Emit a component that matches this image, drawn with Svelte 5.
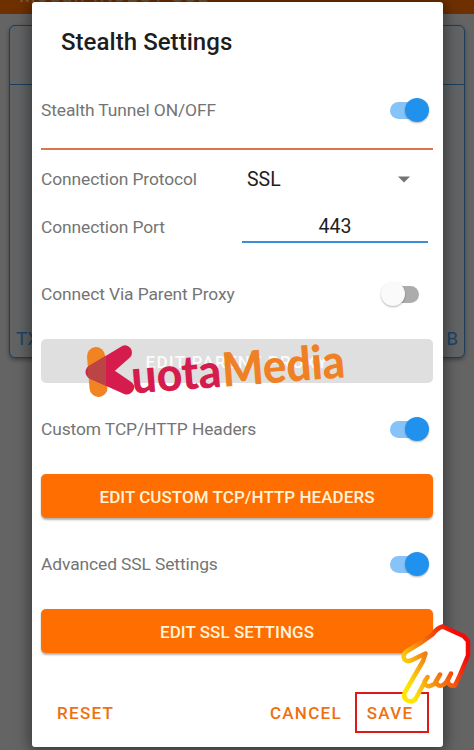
<script lang="ts">
  let stealth = $state(true);
  let parentProxy = $state(false);
  let customHeaders = $state(true);
  let advancedSsl = $state(true);
  let port = $state("443");
</script>

{#snippet toggle(on: boolean, flip: () => void, label: string)}
  <button class="switch" class:on role="switch" aria-checked={on} aria-label={label} onclick={flip}>
    <span class="thumb"></span>
  </button>
{/snippet}

<div class="screen">
  <div class="page">
    <header><span>Modul: INJECT SSL</span></header>
    <div class="card">
      <div class="card-top"></div>
      <div class="card-foot"><span>TX</span><span>B</span></div>
    </div>
  </div>

  <div class="dialog" role="dialog" aria-label="Stealth Settings">
    <h1>Stealth Settings</h1>

    <div class="row first">
      <span class="label">Stealth Tunnel ON/OFF</span>
      {@render toggle(stealth, () => (stealth = !stealth), "Stealth Tunnel")}
    </div>

    <div class="row protocol">
      <span class="label">Connection Protocol</span>
      <div class="select">
        <span>SSL</span>
        <svg width="12" height="7" viewBox="0 0 12 7"><path d="M0 0.5h12L6 6.5z" fill="#737373" /></svg>
      </div>
    </div>

    <div class="row port">
      <span class="label">Connection Port</span>
      <input bind:value={port} aria-label="Connection Port" />
    </div>

    <div class="row proxy">
      <span class="label">Connect Via Parent Proxy</span>
      {@render toggle(parentProxy, () => (parentProxy = !parentProxy), "Parent Proxy")}
    </div>
    <button class="wide" disabled={!parentProxy}>EDIT PARENT PROXY</button>

    <div class="row">
      <span class="label">Custom TCP/HTTP Headers</span>
      {@render toggle(customHeaders, () => (customHeaders = !customHeaders), "Custom Headers")}
    </div>
    <button class="wide" disabled={!customHeaders}>EDIT CUSTOM TCP/HTTP HEADERS</button>

    <div class="row">
      <span class="label">Advanced SSL Settings</span>
      {@render toggle(advancedSsl, () => (advancedSsl = !advancedSsl), "Advanced SSL")}
    </div>
    <button class="wide" disabled={!advancedSsl}>EDIT SSL SETTINGS</button>

    <footer>
      <button class="text-btn reset">RESET</button>
      <button class="text-btn">CANCEL</button>
      <button class="text-btn save">SAVE</button>
    </footer>
  </div>

  <!-- watermark -->
  <svg class="brand" width="270" height="60" viewBox="80 340 270 60">
    <defs>
      <clipPath id="bar"><path d="M87 340h19v60H88z" /></clipPath>
    </defs>
    <path d="M96 356L98.5 388" stroke="#f28322" stroke-width="18" stroke-linecap="round" />
    <path class="k" d="M125 352.500L92.500 372L127 387.500L103.500 371.500Z" fill="#d51c4d" stroke="#d51c4d" />
    <g clip-path="url(#bar)">
      <path class="k" d="M125 352.500L92.500 372L127 387.500L103.500 371.500Z" fill="#ba4545" stroke="#ba4545" />
    </g>
    <g transform="rotate(-4.4 134 393)">
      <text x="132.500" y="393.500" textLength="90" lengthAdjust="spacingAndGlyphs" fill="#d51c4d">uota</text>
      <text x="223.500" y="393.500" textLength="123" lengthAdjust="spacingAndGlyphs" fill="#ef8124">Media</text>
    </g>
  </svg>

  <!-- pointing hand -->
  <svg class="hand" width="74" height="84" viewBox="400 622 74 84">
    <defs>
      <linearGradient id="heat" gradientUnits="userSpaceOnUse" x1="404" y1="680" x2="464" y2="650">
        <stop offset="0" stop-color="#ffe600" />
        <stop offset="0.15" stop-color="#f9c810" />
        <stop offset="0.4" stop-color="#f48a12" />
        <stop offset="0.75" stop-color="#f33c0c" />
        <stop offset="1" stop-color="#f40808" />
      </linearGradient>
    </defs>
    <path
      d="M442.5 626.5Q437 628 432.5 634.5L422 642L406.5 651.5Q402 655 404.5 659.5Q407.5 662.5 412 660L425.5 653.5L423 661L405 692Q402.5 698 407.5 700.5Q413 703 416 698L427.5 677L424.5 681.5Q425 687 430 686L434.5 684L440 674.5L436 681Q437 687.5 443 685L446 682.5L451 673.5L447.5 681Q449 687 455 685.5L459 677L468 655.5V641L463.5 636Z"
      fill="#fff"
      stroke="url(#heat)"
      stroke-width="4.5"
      stroke-linejoin="round"
      stroke-linecap="round"
    />
  </svg>
</div>

<style>
  :global(body) {
    margin: 0;
    background: #636363;
  }

  .screen {
    position: relative;
    width: 474px;
    height: 750px;
    overflow: hidden;
    font-family: Roboto, "Liberation Sans", sans-serif;
    background: #646464;
  }

  .page {
    position: absolute;
    inset: 0;
    display: flex;
    flex-direction: column;
  }

  header {
    height: 14px;
    background: #6f3000;
    overflow: hidden;
    padding-left: 19px;
    color: #74583f;
    font-size: 19px;
    font-weight: 500;
    letter-spacing: 1.5px;
  }

  header span {
    display: block;
    margin-top: -14px;
    line-height: 20px;
  }

  .card {
    box-sizing: border-box;
    display: flex;
    flex-direction: column;
    justify-content: space-between;
    height: 333px;
    margin: 11px 9px 0;
    border: 1.5px solid #1d3f5b;
    border-radius: 6px;
    background: #616364;
    box-shadow: 0 2px 4px rgba(0, 0, 0, 0.35);
  }

  .card-top {
    height: 58px;
    border-bottom: 1px solid #1d3f5b;
  }

  .card-foot {
    display: flex;
    justify-content: space-between;
    padding: 0 6px 6px;
    font-size: 19px;
    line-height: 24px;
    color: #1c4467;
  }

  .dialog {
    position: absolute;
    top: 2px;
    left: 32px;
    box-sizing: border-box;
    display: flex;
    flex-direction: column;
    width: 411px;
    height: 744.5px;
    padding: 0 10px 0 9px;
    border-radius: 3px;
    background: #fff;
    box-shadow: 0 2px 14px 3px rgba(0, 0, 0, 0.4);
  }

  h1 {
    margin: 20px 0 0 20px;
    font-size: 24px;
    line-height: 40px;
    font-weight: 500;
    letter-spacing: 0.05px;
    color: #1d1d1d;
  }

  .row {
    display: flex;
    align-items: center;
    justify-content: space-between;
    height: 91px;
    flex: none;
  }

  .row.first {
    height: 76px;
    margin-top: 10px;
    border-bottom: 2px solid #d9764b;
  }

  .row.protocol {
    height: 58px;
  }

  .row.port {
    height: 38px;
  }

  .row.proxy {
    height: 90px;
    margin-top: 3px;
  }

  .label {
    font-size: 17.4px;
    letter-spacing: -0.1px;
    color: #747474;
    white-space: nowrap;
  }

  .select {
    display: flex;
    align-items: center;
    justify-content: space-between;
    width: 163px;
    padding-right: 23px;
    font-size: 19.5px;
    color: #1f1f1f;
  }

  input {
    box-sizing: border-box;
    width: 186px;
    height: 34px;
    margin: -3px 5px 0 0;
    padding: 3px 0 0;
    border: 0;
    border-bottom: 2px solid #3b8fd9;
    outline: none;
    background: none;
    font: 19.5px Roboto, sans-serif;
    text-align: center;
    color: #1f1f1f;
  }

  .switch {
    position: relative;
    width: 38px;
    height: 17px;
    margin: 1px 5px 0 0;
    padding: 0;
    border: 0;
    border-radius: 9px;
    background: #86c3f8;
  }

  .first .switch {
    margin-top: 0;
  }

  .switch:not(.on) {
    width: 36px;
    margin: 0 14px 0 0;
    background: #acacac;
  }

  .thumb {
    position: absolute;
    top: -4px;
    right: -0.5px;
    width: 24px;
    height: 24px;
    border-radius: 50%;
    background: #2191ee;
    box-shadow: 0 1px 2px rgba(0, 0, 0, 0.3);
  }

  .switch:not(.on) .thumb {
    right: auto;
    left: -2px;
    background: #fafafa;
  }

  .wide {
    flex: none;
    height: 44px;
    padding: 1px 0 0;
    border: 0;
    border-radius: 5px;
    background: #ff6e00;
    box-shadow: 0 1.5px 2px rgba(0, 0, 0, 0.3);
    color: #fff3d9;
    font: 500 17px Roboto, sans-serif;
    letter-spacing: 0.05px;
  }

  .wide:disabled {
    background: #dfdfdf;
    box-shadow: none;
    color: #fcfcfc;
    letter-spacing: 1.3px;
  }

  footer {
    display: flex;
    align-items: center;
    margin-top: 39px;
    height: 41px;
  }

  .text-btn {
    box-sizing: border-box;
    height: 41px;
    padding: 1px 0 0;
    border: 0;
    background: none;
    color: #ee7011;
    font: 500 17px Roboto, sans-serif;
    letter-spacing: 1.3px;
  }

  .reset {
    margin: 0 auto 0 16px;
  }

  .save {
    width: 74px;
    margin: 0 4px 0 13px;
    padding-right: 4px;
    border: 2px solid #dc1a1a;
  }

  .brand {
    position: absolute;
    top: 340px;
    left: 80px;
    pointer-events: none;
    overflow: visible;
  }

  .brand .k {
    stroke-width: 14px;
    stroke-linejoin: round;
  }

  .brand text {
    font: 900 47px Lato, "Open Sans", sans-serif;
  }

  .hand {
    position: absolute;
    top: 622px;
    left: 400px;
    pointer-events: none;
  }
</style>
